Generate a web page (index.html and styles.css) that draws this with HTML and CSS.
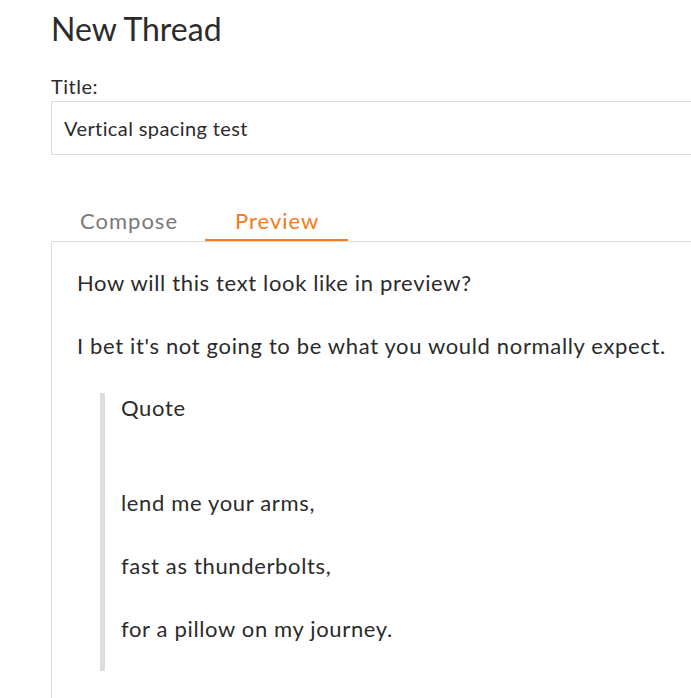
FILE: index.html
```html
<!DOCTYPE html>
<html>
<head>
<meta charset="utf-8">
<link rel="stylesheet" href="styles.css">
</head>
<body>
<div class="page">
  <h1 class="title">New Thread</h1>
  <label class="label">Title:</label>
  <div class="input">Vertical spacing test</div>
  <div class="tabs">
    <div class="tab">Compose</div>
    <div class="tab active">Preview</div>
  </div>
  <div class="preview">
    <p>How will this text look like in preview?</p>
    <p class="before-quote">I bet it's not going to be what you would normally expect.</p>
    <blockquote class="quote">
      <p class="q-first">Quote</p>
      <p>lend me your arms,</p>
      <p>fast as thunderbolts,</p>
      <p class="q-last">for a pillow on my journey.</p>
    </blockquote>
  </div>
</div>
</body>
</html>
```

FILE: styles.css
```css
html, body {
  margin: 0;
  padding: 0;
  background: #fff;
}
body {
  font-family: Lato, "Open Sans", sans-serif;
  color: #2b2b2b;
  overflow: hidden;
}
.page {
  box-sizing: border-box;
  height: 698px;
  overflow: hidden;
  padding-left: 51px;
  padding-top: 9px;
}
.title {
  margin: 0;
  font-size: 32px;
  font-weight: 400;
  line-height: 40px;
}
.label {
  display: block;
  margin-top: 25px;
  font-size: 20px;
  line-height: 24px;
  letter-spacing: 0.5px;
}
.input {
  margin-top: 3px;
  margin-right: -60px;
  height: 52px;
  border: 1px solid #dcdcdc;
  padding-left: 12px;
  font-size: 20px;
  line-height: 52px;
  letter-spacing: 0.4px;
}
.tabs {
  display: flex;
  margin-top: 48px;
}
.tab {
  font-size: 22px;
  line-height: 36px;
  letter-spacing: 1px;
  color: #7a7a7a;
  padding: 0 27px 0 29px;
  border-bottom: 2px solid transparent;
}
.tab.active {
  color: #f47b20;
  border-bottom-color: #f47b20;
  padding: 0 29px 0 30px;
}
.preview {
  border-top: 1px solid #dcdcdc;
  border-left: 1px solid #dcdcdc;
  margin-right: -60px;
  height: 600px;
  padding: 26px 0 0 25px;
  font-size: 22px;
  letter-spacing: 0.65px;
}
.preview p {
  margin: 0 0 33px;
  line-height: 30px;
}
.preview p.before-quote {
  margin-bottom: 32px;
}
.quote {
  margin: 0 0 0 23px;
  border-left: 5px solid #dddddd;
  padding: 0 0 27px 16px;
}
.quote p.q-first {
  margin-bottom: 65px;
}
.quote p.q-last {
  margin-bottom: 0;
}
```
